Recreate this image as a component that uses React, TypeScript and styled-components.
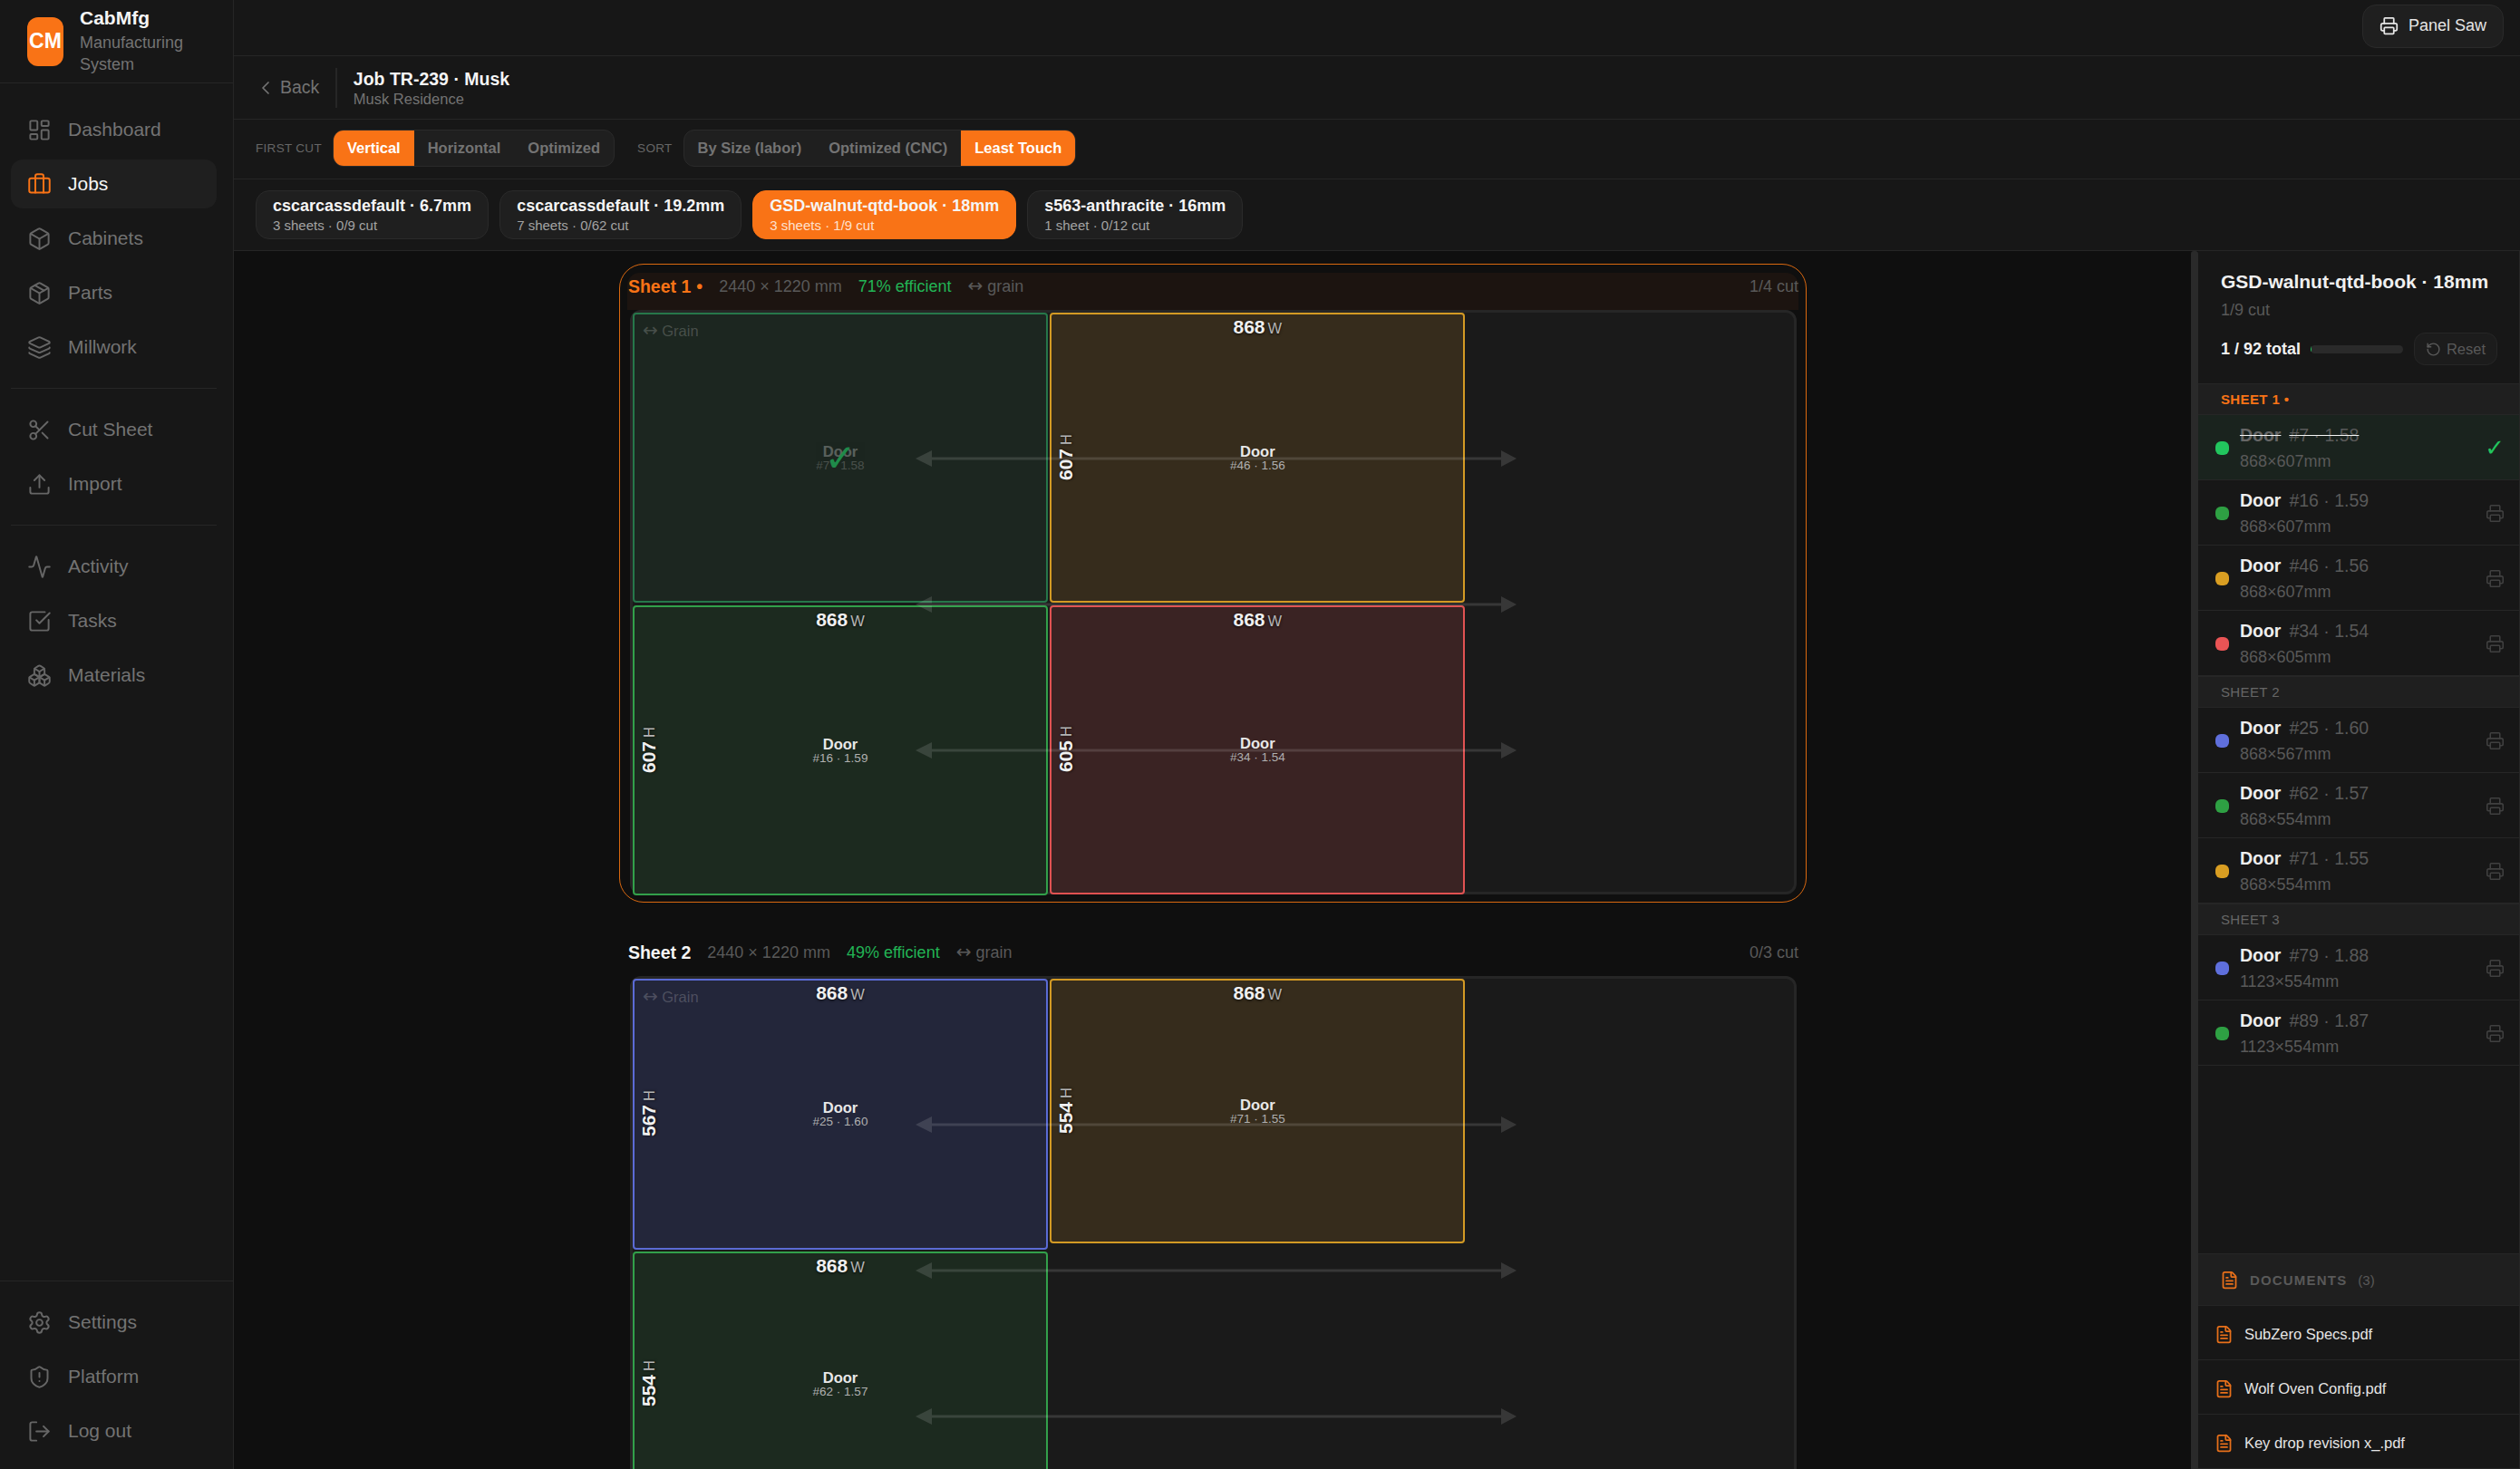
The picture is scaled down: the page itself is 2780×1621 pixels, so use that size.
import styled, { createGlobalStyle } from "styled-components";
import {
    Activity,
    Box,
    Boxes,
    Briefcase,
    ChevronLeft,
    FileText,
    Layers,
    LayoutDashboard,
    LogOut,
    Package,
    Printer,
    RotateCcw,
    Scissors,
    Settings,
    ShieldAlert,
    SquareCheckBig,
    Upload,
} from "lucide-react";

const GlobalStyle = createGlobalStyle`
    * {
        box-sizing: border-box;
    }
    html, body {
        margin: 0;
        height: 100%;
        background: #0f0f0f;
        overflow: hidden;
    }
    body {
        font-family: "Liberation Sans", Arial, sans-serif;
        color: #f5f5f5;
    }
`;

const colors = {
    green: { bg: "#1c2a1f", border: "#32a04a", dot: "#2ea043" },
    amber: { bg: "#362c1c", border: "#d39a24", dot: "#d99e22" },
    red: { bg: "#3a2323", border: "#e05252", dot: "#ea5455" },
    blue: { bg: "#23263a", border: "#5b6bd5", dot: "#5f6fdc" },
    done: { bg: "#1c2620", border: "#26774a", dot: "#22c55e" },
};
type Tone = keyof typeof colors;

type PanelType = {
    x: number
    y: number
    w: number
    h: number
    tag: string
    tone: Tone
    done?: boolean
};

type SheetType = {
    title: string
    efficiency: string
    cut: string
    active?: boolean
    panels: PanelType[]
};

const SCALE = 0.5255;

const sheets: SheetType[] = [
    {
        title: "Sheet 1",
        efficiency: "71% efficient",
        cut: "1/4 cut",
        active: true,
        panels: [
            { x: 0, y: 0, w: 868, h: 607, tag: "#7 · 1.58", tone: "done", done: true },
            { x: 876, y: 0, w: 868, h: 607, tag: "#46 · 1.56", tone: "amber" },
            { x: 0, y: 615, w: 868, h: 607, tag: "#16 · 1.59", tone: "green" },
            { x: 876, y: 615, w: 868, h: 605, tag: "#34 · 1.54", tone: "red" },
        ],
    },
    {
        title: "Sheet 2",
        efficiency: "49% efficient",
        cut: "0/3 cut",
        panels: [
            { x: 0, y: 0, w: 868, h: 567, tag: "#25 · 1.60", tone: "blue" },
            { x: 876, y: 0, w: 868, h: 554, tag: "#71 · 1.55", tone: "amber" },
            { x: 0, y: 573, w: 868, h: 554, tag: "#62 · 1.57", tone: "green" },
        ],
    },
];

const cutGroups = [
    {
        label: "SHEET 1 •",
        active: true,
        rows: [
            { num: "#7 · 1.58", size: "868×607mm", tone: "done" as Tone, done: true },
            { num: "#16 · 1.59", size: "868×607mm", tone: "green" as Tone },
            { num: "#46 · 1.56", size: "868×607mm", tone: "amber" as Tone },
            { num: "#34 · 1.54", size: "868×605mm", tone: "red" as Tone },
        ],
    },
    {
        label: "SHEET 2",
        rows: [
            { num: "#25 · 1.60", size: "868×567mm", tone: "blue" as Tone },
            { num: "#62 · 1.57", size: "868×554mm", tone: "green" as Tone },
            { num: "#71 · 1.55", size: "868×554mm", tone: "amber" as Tone },
        ],
    },
    {
        label: "SHEET 3",
        rows: [
            { num: "#79 · 1.88", size: "1123×554mm", tone: "blue" as Tone },
            { num: "#89 · 1.87", size: "1123×554mm", tone: "green" as Tone },
        ],
    },
];

const navGroups = [
    [
        { label: "Dashboard", icon: LayoutDashboard },
        { label: "Jobs", icon: Briefcase, active: true },
        { label: "Cabinets", icon: Box },
        { label: "Parts", icon: Package },
        { label: "Millwork", icon: Layers },
    ],
    [
        { label: "Cut Sheet", icon: Scissors },
        { label: "Import", icon: Upload },
    ],
    [
        { label: "Activity", icon: Activity },
        { label: "Tasks", icon: SquareCheckBig },
        { label: "Materials", icon: Boxes },
    ],
];

const footerNav = [
    { label: "Settings", icon: Settings },
    { label: "Platform", icon: ShieldAlert },
    { label: "Log out", icon: LogOut },
];

const materials = [
    { name: "cscarcassdefault · 6.7mm", info: "3 sheets · 0/9 cut" },
    { name: "cscarcassdefault · 19.2mm", info: "7 sheets · 0/62 cut" },
    { name: "GSD-walnut-qtd-book · 18mm", info: "3 sheets · 1/9 cut", active: true },
    { name: "s563-anthracite · 16mm", info: "1 sheet · 0/12 cut" },
];

const documents = ["SubZero Specs.pdf", "Wolf Oven Config.pdf", "Key drop revision x_.pdf"];

const Arrows = () => (
    <ArrowLayer viewBox="0 0 1281 644" width="1281" height="644">
        {[161, 322, 483].map((y) => (
            <g key={y} fill="rgba(255,255,255,0.13)">
                <rect x="330" y={y - 1.5} width="628" height="3" />
                <path d={`M312 ${y} L330 ${y - 9} L330 ${y + 9} Z`} />
                <path d={`M975 ${y} L958 ${y - 9} L958 ${y + 9} Z`} />
            </g>
        ))}
    </ArrowLayer>
);

const CutPanel = ({ panel, grain }: { panel: PanelType; grain: boolean }) => (
    <Panel
        $tone={panel.tone}
        style={{
            left: panel.x * SCALE,
            top: panel.y * SCALE,
            width: panel.w * SCALE + 2,
            height: panel.h * SCALE + 1.5,
        }}
    >
        {grain && <GrainTag><GrainArrow>↔</GrainArrow> Grain</GrainTag>}
        {!panel.done && (
            <>
                <WidthLabel>{panel.w}<small>W</small></WidthLabel>
                <HeightLabel>{panel.h}<small>H</small></HeightLabel>
            </>
        )}
        <PanelCenter $done={panel.done}>
            <PanelName>Door</PanelName>
            <PanelTag>{panel.tag}</PanelTag>
        </PanelCenter>
        {panel.done && <PanelCheck>✓</PanelCheck>}
    </Panel>
);

const Sheet = ({ sheet }: { sheet: SheetType }) => (
    <SheetCard $active={sheet.active}>
        <SheetHeader $active={sheet.active}>
            <SheetTitle $active={sheet.active}>
                {sheet.title}{sheet.active && <SheetBullet>•</SheetBullet>}
            </SheetTitle>
            <SheetSize>2440 × 1220 mm</SheetSize>
            <SheetEfficiency>{sheet.efficiency}</SheetEfficiency>
            <SheetGrain><GrainArrow>↔</GrainArrow> grain</SheetGrain>
            <SheetCut>{sheet.cut}</SheetCut>
        </SheetHeader>
        <Board>
            {sheet.panels.map((panel, i) => (
                <CutPanel key={panel.tag} panel={panel} grain={i === 0} />
            ))}
            <Arrows />
        </Board>
    </SheetCard>
);

export default function App() {
    return (
        <Shell>
            <GlobalStyle />
            <Sidebar>
                <Brand>
                    <BrandLogo>CM</BrandLogo>
                    <BrandText>
                        <BrandName>CabMfg</BrandName>
                        <BrandSub>Manufacturing System</BrandSub>
                    </BrandText>
                </Brand>
                <NavArea>
                    {navGroups.map((group, i) => (
                        <NavGroup key={i}>
                            {group.map((item) => (
                                <NavItem key={item.label} $active={item.active}>
                                    <item.icon size={27} strokeWidth={1.75} />
                                    {item.label}
                                </NavItem>
                            ))}
                        </NavGroup>
                    ))}
                </NavArea>
                <NavFooter>
                    {footerNav.map((item) => (
                        <NavItem key={item.label}>
                            <item.icon size={27} strokeWidth={1.75} />
                            {item.label}
                        </NavItem>
                    ))}
                </NavFooter>
            </Sidebar>
            <Workspace>
                <TopBar>
                    <SawButton>
                        <Printer size={21} strokeWidth={2} />
                        Panel Saw
                    </SawButton>
                </TopBar>
                <JobHeader>
                    <BackLink>
                        <ChevronLeft size={24} strokeWidth={1.75} />
                        Back
                    </BackLink>
                    <JobDivider />
                    <div>
                        <JobTitle>Job TR-239 · Musk</JobTitle>
                        <JobSub>Musk Residence</JobSub>
                    </div>
                </JobHeader>
                <Toolbar>
                    <ToolLabel>FIRST CUT</ToolLabel>
                    <Segments>
                        <Segment $active>Vertical</Segment>
                        <Segment>Horizontal</Segment>
                        <Segment>Optimized</Segment>
                    </Segments>
                    <ToolLabel $gap>SORT</ToolLabel>
                    <Segments>
                        <Segment>By Size (labor)</Segment>
                        <Segment>Optimized (CNC)</Segment>
                        <Segment $active>Least Touch</Segment>
                    </Segments>
                </Toolbar>
                <MaterialBar>
                    {materials.map((m) => (
                        <MaterialTab key={m.name} $active={m.active}>
                            <MaterialName>{m.name}</MaterialName>
                            <MaterialInfo $active={m.active}>{m.info}</MaterialInfo>
                        </MaterialTab>
                    ))}
                </MaterialBar>
                <Content>
                    <Canvas>
                        {sheets.map((sheet) => (
                            <Sheet key={sheet.title} sheet={sheet} />
                        ))}
                    </Canvas>
                    <ResizeHandle />
                    <CutList>
                        <CutHead>
                            <CutTitle>GSD-walnut-qtd-book · 18mm</CutTitle>
                            <CutSub>1/9 cut</CutSub>
                            <ProgressRow>
                                <ProgressText>1 / 92 total</ProgressText>
                                <ProgressTrack>
                                    <ProgressFill style={{ width: `${(1 / 92) * 100}%` }} />
                                </ProgressTrack>
                                <ResetButton>
                                    <RotateCcw size={17} strokeWidth={2} />
                                    Reset
                                </ResetButton>
                            </ProgressRow>
                        </CutHead>
                        <CutRows>
                            {cutGroups.map((group) => (
                                <div key={group.label}>
                                    <GroupHeader $active={group.active}>{group.label}</GroupHeader>
                                    {group.rows.map((row) => (
                                        <CutRow key={row.num} $done={row.done}>
                                            <Dot $tone={row.tone} />
                                            <RowBody>
                                                <RowTitle $done={row.done}>
                                                    <strong>Door</strong>
                                                    <span>{row.num}</span>
                                                </RowTitle>
                                                <RowSize>{row.size}</RowSize>
                                            </RowBody>
                                            {row.done ? (
                                                <RowCheck>✓</RowCheck>
                                            ) : (
                                                <RowPrint>
                                                    <Printer size={21} strokeWidth={1.75} />
                                                </RowPrint>
                                            )}
                                        </CutRow>
                                    ))}
                                </div>
                            ))}
                        </CutRows>
                        <Documents>
                            <DocumentsHead>
                                <FileText size={21} strokeWidth={2} />
                                <DocumentsTitle>DOCUMENTS</DocumentsTitle>
                                <DocumentsCount>(3)</DocumentsCount>
                            </DocumentsHead>
                            {documents.map((name) => (
                                <DocumentRow key={name}>
                                    <FileText size={21} strokeWidth={2} />
                                    {name}
                                </DocumentRow>
                            ))}
                        </Documents>
                    </CutList>
                </Content>
            </Workspace>
        </Shell>
    );
}

const Shell = styled.div`
    display: flex;
    width: 2780px;
    height: 1621px;
    overflow: hidden;
`;

const Sidebar = styled.aside`
    flex: 0 0 258px;
    display: flex;
    flex-direction: column;
    background: #171717;
    border-right: 1.5px solid #262626;
`;

const Brand = styled.div`
    height: 92px;
    flex: none;
    display: flex;
    align-items: center;
    gap: 18px;
    padding: 0 30px;
    border-bottom: 1.5px solid #262626;
`;

const BrandLogo = styled.div`
    flex: 0 0 40px;
    height: 54px;
    display: flex;
    align-items: center;
    justify-content: center;
    border-radius: 12px;
    background: #f97316;
    color: #fff;
    font-weight: 700;
    font-size: 23px;
`;

const BrandText = styled.div`
    min-width: 0;
    margin-top: -4px;
`;

const BrandName = styled.div`
    font-weight: 700;
    font-size: 21px;
    line-height: 30px;
    color: #f5f5f5;
`;

const BrandSub = styled.div`
    font-size: 18px;
    line-height: 24px;
    color: #737373;
`;

const NavArea = styled.nav`
    flex: 1;
    padding: 24px 18px 0 12px;
`;

const NavGroup = styled.div`
    display: flex;
    flex-direction: column;
    gap: 6px;
    padding-bottom: 18px;
    margin-bottom: 18px;
    border-bottom: 1.5px solid #262626;
    &:last-child {
        border-bottom: 0;
    }
`;

const NavItem = styled.div<{ $active?: boolean }>`
    height: 54px;
    display: flex;
    align-items: center;
    gap: 18px;
    padding: 0 18px;
    border-radius: 13px;
    font-size: 21px;
    background: ${(p) => (p.$active ? "#1f1f1f" : "transparent")};
    color: ${(p) => (p.$active ? "#f5f5f5" : "#737373")};
    svg {
        flex: none;
        color: ${(p) => (p.$active ? "#f97316" : "#666")};
    }
`;

const NavFooter = styled.div`
    flex: none;
    display: flex;
    flex-direction: column;
    gap: 6px;
    padding: 18px 18px 15px 12px;
    border-top: 1.5px solid #262626;
`;

const Workspace = styled.main`
    flex: 1;
    min-width: 0;
    display: flex;
    flex-direction: column;
`;

const TopBar = styled.header`
    flex: 0 0 62px;
    display: flex;
    align-items: center;
    justify-content: flex-end;
    padding: 0 18px 0 0;
    background: #171717;
    border-bottom: 1.5px solid #262626;
`;

const SawButton = styled.div`
    height: 48px;
    display: flex;
    align-items: center;
    gap: 11px;
    padding: 0 18px;
    border: 1.5px solid #2a2a2a;
    border-radius: 15px;
    background: #1f1f1f;
    color: #e5e5e5;
    font-size: 18px;
    margin-top: -4px;
`;

const JobHeader = styled.div`
    flex: 0 0 70px;
    display: flex;
    align-items: center;
    padding-left: 23px;
    background: #171717;
    border-bottom: 1.5px solid #262626;
`;

const BackLink = styled.div`
    display: flex;
    align-items: center;
    gap: 4px;
    color: #737373;
    font-size: 19.5px;
`;

const JobDivider = styled.div`
    width: 1.5px;
    height: 44px;
    margin: 0 18px;
    background: #262626;
`;

const JobTitle = styled.div`
    font-weight: 700;
    font-size: 19.5px;
    line-height: 26px;
    margin-top: -2px;
    color: #f5f5f5;
`;

const JobSub = styled.div`
    font-size: 16.5px;
    line-height: 18px;
    color: #737373;
`;

const Toolbar = styled.div`
    flex: 0 0 66px;
    display: flex;
    align-items: center;
    padding: 0 0 2px 24px;
    background: #171717;
    border-bottom: 1.5px solid #262626;
`;

const ToolLabel = styled.span<{ $gap?: boolean }>`
    margin: 0 12px 0 ${(p) => (p.$gap ? "25px" : "0")};
    font-size: 13.5px;
    letter-spacing: 0.3px;
    color: #666;
`;

const Segments = styled.div`
    display: flex;
    height: 41px;
    overflow: hidden;
    border: 1.5px solid #2a2a2a;
    border-radius: 12px;
    background: #1f1f1f;
`;

const Segment = styled.div<{ $active?: boolean }>`
    display: flex;
    align-items: center;
    padding: 0 15px;
    font-weight: 700;
    font-size: 16.5px;
    background: ${(p) => (p.$active ? "#f97316" : "transparent")};
    color: ${(p) => (p.$active ? "#fff" : "#737373")};
`;

const MaterialBar = styled.div`
    flex: 0 0 79px;
    display: flex;
    align-items: flex-start;
    gap: 12px;
    padding: 12px 24px 0;
    background: #171717;
    border-bottom: 1.5px solid #262626;
`;

const MaterialTab = styled.div<{ $active?: boolean }>`
    height: 54px;
    padding: 6px 18px 0;
    border: 1.5px solid ${(p) => (p.$active ? "#f97316" : "#2a2a2a")};
    border-radius: 15px;
    background: ${(p) => (p.$active ? "#f97316" : "#1f1f1f")};
`;

const MaterialName = styled.div`
    font-weight: 700;
    font-size: 18px;
    line-height: 21px;
    color: #f5f5f5;
`;

const MaterialInfo = styled.div<{ $active?: boolean }>`
    margin-top: 1px;
    font-size: 15px;
    line-height: 20px;
    color: ${(p) => (p.$active ? "rgba(255,255,255,0.8)" : "#a3a3a3")};
`;

const Content = styled.div`
    flex: 1;
    min-height: 0;
    display: flex;
`;

const Canvas = styled.div`
    flex: 1;
    min-width: 0;
    overflow: hidden;
    padding: 14px 0 0 1px;
    background: #0f0f0f;
    display: flex;
    flex-direction: column;
    align-items: center;
    gap: 30px;
`;

const ResizeHandle = styled.div`
    flex: 0 0 8px;
    background: #2a2a2a;
    border-radius: 3px 3px 0 0;
`;

const SheetCard = styled.section<{ $active?: boolean }>`
    flex: none;
    width: 1310px;
    padding: 8.5px 8px;
    border: 1.5px solid ${(p) => (p.$active ? "#d9680f" : "transparent")};
    border-radius: 27px;
`;

const SheetHeader = styled.div<{ $active?: boolean }>`
    height: 41px;
    display: flex;
    align-items: flex-start;
    padding: 3px 0 0 1px;
    background: ${(p) => (p.$active ? "#1c1410" : "transparent")};
    border-radius: 14px 14px 0 0;
`;

const SheetTitle = styled.span<{ $active?: boolean }>`
    font-weight: 700;
    font-size: 19.5px;
    line-height: 24px;
    color: ${(p) => (p.$active ? "#f97316" : "#f5f5f5")};
    margin-right: 18px;
`;

const SheetBullet = styled.span`
    margin-left: 6px;
`;

const SheetSize = styled.span`
    font-size: 18px;
    line-height: 24px;
    color: #595959;
    margin-right: 18px;
`;

const SheetEfficiency = styled.span`
    font-size: 18px;
    line-height: 24px;
    color: #22b455;
    margin-right: 18px;
`;

const SheetGrain = styled.span`
    font-size: 18px;
    line-height: 24px;
    color: #595959;
`;

const GrainArrow = styled.span`
    font-family: "DejaVu Sans", sans-serif;
    font-size: 20px;
    line-height: 1;
`;

const SheetCut = styled.span`
    margin-left: auto;
    font-size: 18px;
    line-height: 24px;
    color: #595959;
`;

const Board = styled.div`
    position: relative;
    width: 1287px;
    height: 645px;
    margin-left: 3px;
    border: 3px solid #262626;
    border-radius: 12px;
    background: #1a1a1a;
`;

const ArrowLayer = styled.svg`
    position: absolute;
    left: 0;
    top: 0;
    pointer-events: none;
`;

const Panel = styled.div<{ $tone: Tone }>`
    position: absolute;
    overflow: hidden;
    border: 2.5px solid ${(p) => colors[p.$tone].border};
    border-radius: 4px;
    background: ${(p) => colors[p.$tone].bg};
`;

const GrainTag = styled.span`
    position: absolute;
    left: 9px;
    top: 7px;
    font-size: 16.5px;
    color: rgba(255, 255, 255, 0.2);
`;

const WidthLabel = styled.div`
    position: absolute;
    left: 0;
    right: 0;
    top: 2px;
    text-align: center;
    font-weight: 700;
    font-size: 21px;
    line-height: 24px;
    color: #f0f0f0;
    text-shadow: 0 1px 3px rgba(0, 0, 0, 0.8);
    small {
        margin-left: 3px;
        font-size: 16.5px;
        font-weight: 400;
        color: #b5b5b5;
    }
`;

const HeightLabel = styled.div`
    position: absolute;
    left: 4px;
    top: 50%;
    width: 24px;
    height: 60px;
    margin-top: -30px;
    display: flex;
    align-items: center;
    justify-content: center;
    gap: 4px;
    writing-mode: vertical-rl;
    transform: rotate(180deg);
    font-weight: 700;
    font-size: 21px;
    color: #f0f0f0;
    text-shadow: 0 1px 3px rgba(0, 0, 0, 0.8);
    small {
        font-size: 16.5px;
        font-weight: 400;
        color: #b5b5b5;
    }
`;

const PanelCenter = styled.div<{ $done?: boolean }>`
    position: absolute;
    left: 0;
    right: 0;
    top: 50%;
    transform: translateY(-50%);
    text-align: center;
    opacity: ${(p) => (p.$done ? 0.3 : 1)};
`;

const PanelName = styled.div`
    font-weight: 700;
    font-size: 16.5px;
    line-height: 16px;
    color: #e8e8e8;
`;

const PanelTag = styled.div`
    font-size: 13.5px;
    line-height: 15px;
    color: #b0b0b0;
`;

const PanelCheck = styled.span`
    position: absolute;
    left: 50%;
    top: 50%;
    transform: translate(-50%, -50%);
    font-family: "DejaVu Sans", sans-serif;
    font-size: 42px;
    color: #1f8b4a;
`;

const CutList = styled.aside`
    flex: 0 0 353px;
    display: flex;
    flex-direction: column;
    min-height: 0;
    background: #171717;
    border-right: 1.5px solid #262626;
`;

const CutHead = styled.div`
    flex: 0 0 146px;
    padding: 22px 24px 0 25px;
`;

const CutTitle = styled.div`
    font-weight: 700;
    font-size: 21px;
    line-height: 24px;
    white-space: nowrap;
    color: #f0f0f0;
`;

const CutSub = styled.div`
    margin-top: 9px;
    font-size: 18px;
    line-height: 20px;
    color: #595959;
`;

const ProgressRow = styled.div`
    display: flex;
    align-items: center;
    margin-top: 15px;
`;

const ProgressText = styled.span`
    flex: none;
    width: 99px;
    font-weight: 700;
    font-size: 18px;
    color: #f0f0f0;
`;

const ProgressTrack = styled.div`
    width: 102px;
    height: 9px;
    overflow: hidden;
    border-radius: 5px;
    background: #2a2a2a;
`;

const ProgressFill = styled.div`
    height: 100%;
    background: #22c55e;
`;

const ResetButton = styled.div`
    height: 36px;
    margin-left: 12px;
    display: flex;
    align-items: center;
    gap: 6px;
    padding: 0 12px;
    border: 1.5px solid #262626;
    border-radius: 12px;
    background: #1c1c1c;
    font-size: 16.5px;
    color: #595959;
`;

const CutRows = styled.div`
    flex: 1;
    min-height: 0;
    overflow: hidden;
`;

const GroupHeader = styled.div<{ $active?: boolean }>`
    height: 35px;
    display: flex;
    align-items: center;
    padding-left: 25px;
    background: #1f1f1f;
    border-top: 1.5px solid #262626;
    border-bottom: 1.5px solid #262626;
    font-size: 15px;
    font-weight: ${(p) => (p.$active ? 700 : 400)};
    letter-spacing: 0.4px;
    color: ${(p) => (p.$active ? "#f97316" : "#666")};
`;

const CutRow = styled.div<{ $done?: boolean }>`
    height: 72px;
    display: flex;
    align-items: center;
    padding: 0 16px 0 19px;
    background: ${(p) => (p.$done ? "#1a231e" : "transparent")};
    border-bottom: 1.5px solid #262626;
`;

const Dot = styled.span<{ $tone: Tone }>`
    flex: none;
    width: 15px;
    height: 15px;
    margin-top: 2px;
    border-radius: 6px;
    background: ${(p) => colors[p.$tone].dot};
`;

const RowBody = styled.div`
    flex: 1;
    margin-left: 12px;
`;

const RowTitle = styled.div<{ $done?: boolean }>`
    display: flex;
    gap: 9px;
    font-size: 19.5px;
    line-height: 26px;
    text-decoration: ${(p) => (p.$done ? "line-through" : "none")};
    strong {
        color: ${(p) => (p.$done ? "#666" : "#eee")};
    }
    span {
        color: #595959;
    }
`;

const RowSize = styled.div`
    margin-top: 5px;
    font-size: 18px;
    line-height: 22px;
    color: #595959;
`;

const RowCheck = styled.span`
    font-family: "DejaVu Sans", sans-serif;
    font-size: 26px;
    color: #22c55e;
`;

const RowPrint = styled.span`
    display: flex;
    margin-top: 2px;
    color: #404040;
`;

const Documents = styled.div`
    flex: 0 0 234px;
    border-top: 1.5px solid #262626;
    svg {
        flex: none;
        color: #e8701a;
    }
`;

const DocumentsHead = styled.div`
    height: 57px;
    display: flex;
    align-items: center;
    padding-left: 24px;
    background: #1f1f1f;
    border-bottom: 1.5px solid #262626;
`;

const DocumentsTitle = styled.span`
    margin-left: 12px;
    font-weight: 700;
    font-size: 15px;
    letter-spacing: 1.2px;
    color: #595959;
`;

const DocumentsCount = styled.span`
    margin-left: 12px;
    font-size: 15px;
    color: #595959;
`;

const DocumentRow = styled.div`
    height: 60px;
    display: flex;
    align-items: center;
    gap: 12px;
    padding: 3px 0 0 18px;
    border-bottom: 1.5px solid #262626;
    font-size: 16.5px;
    color: #e5e5e5;
`;
